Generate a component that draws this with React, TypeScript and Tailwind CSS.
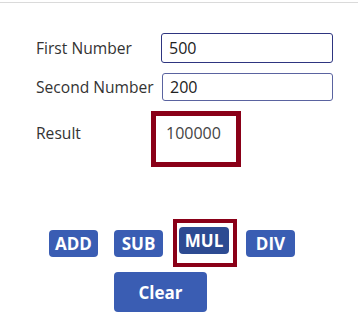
import React from "react";

export default function App() {
  const font = { fontFamily: '"Open Sans", "Noto Sans", sans-serif' };
  return (
    <div className="w-[358px] h-[336px] bg-white text-[#333333] overflow-hidden" style={font}>
      <div className="mt-[2px] h-px bg-[#dadada]" />
      <div className="pl-[36px] pt-[30px]">
        <div className="flex items-center">
          <div className="w-[125px] text-[15.6px] leading-[20px]">First Number</div>
          <div className="w-[172px] h-[30px] border border-[#2e3580] rounded-[3px] flex items-center pl-[7px] text-[16px] text-[#222]">
            500
          </div>
        </div>
        <div className="flex items-center mt-[10px]">
          <div className="w-[126px] text-[15.6px] leading-[20px]">Second Number</div>
          <div className="w-[171px] h-[28px] border border-[#5a63a0] rounded-[3px] flex items-center pl-[7px] text-[16px] text-[#222]">
            200
          </div>
        </div>
        <div className="flex items-start mt-[10px]">
          <div className="w-[115px] text-[15.6px] leading-[20px] mt-[12px]">Result</div>
          <div className="w-[90px] h-[56px] border-[5px] border-[#8a0018] pl-[10px] pt-[7px] text-[16px] leading-[20px] text-[#444]">
            100000
          </div>
        </div>
      </div>
      <div className="flex items-center pl-[49px] mt-[52px]">
        <button className="w-[49px] h-[27px] rounded-[4px] bg-[#3a5db3] text-white font-bold text-[17px] leading-none flex items-center justify-center">
          ADD
        </button>
        <button className="ml-[16px] w-[49px] h-[27px] rounded-[4px] bg-[#3a5db3] text-white font-bold text-[17px] leading-none flex items-center justify-center">
          SUB
        </button>
        <div className="ml-[10px] w-[64px] h-[48px] border-4 border-[#8a0018] pt-[4px] pl-[2px]">
          <button className="w-[50px] h-[27px] rounded-[4px] bg-[#2d4b92] text-white font-bold text-[17px] leading-none flex items-center justify-center">
            MUL
          </button>
        </div>
        <button className="ml-[9px] w-[49px] h-[27px] rounded-[4px] bg-[#3a5db3] text-white font-bold text-[17px] leading-none flex items-center justify-center">
          DIV
        </button>
      </div>
      <div className="pl-[114px] mt-[5px]">
        <button className="w-[93px] h-[40px] rounded-[4px] bg-[#3a5db3] text-white font-bold text-[17px] leading-none flex items-center justify-center">
          Clear
        </button>
      </div>
    </div>
  );
}
